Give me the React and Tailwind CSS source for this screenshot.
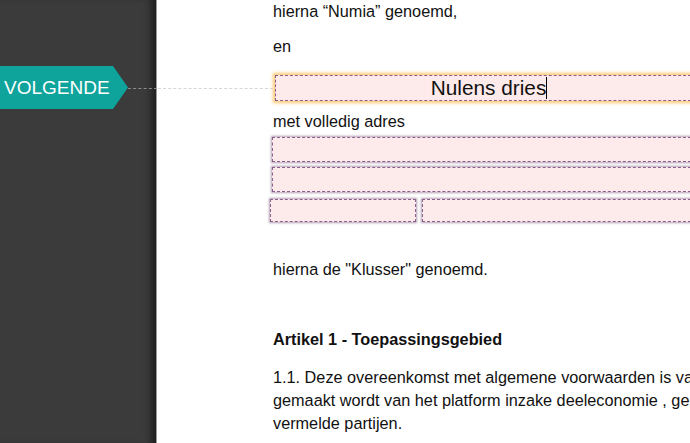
export default function App() {
    const field = 'bg-[#fdeaea] border border-dashed border-[#8b5f8b] shadow-[0_0_2px_1px_rgba(130,95,130,0.6)]';

    return (
        <div className="relative flex h-screen w-full overflow-hidden bg-white font-['Liberation_Sans',Arial,sans-serif] text-[#111]">
            {/* Left dark rail */}
            <div className="w-[157px] shrink-0 h-full bg-[#3b3b3b] border-r border-[#9a9a9a] shadow-[inset_-9px_0_8px_-5px_rgba(0,0,0,0.55)]"></div>

            {/* Document page */}
            <div className="flex-1 min-w-0">
                <div className="ml-[116px] w-[428px] text-[16.25px]">
                    <p className="leading-[22px] whitespace-nowrap">hierna “Numia” genoemd,</p>
                    <p className="mt-[13px] leading-[22px]">en</p>

                    {/* focused name field */}
                    <div className="mt-[18px] ml-[2px] h-[26px] flex items-center justify-center bg-[#fdeaea] border border-dashed border-[#8b5f8b] shadow-[0_0_3px_2px_rgba(251,190,90,0.85)]">
                        <span className="text-[20.8px] leading-[24px] pl-[2px]">Nulens dries</span>
                        <span className="w-px h-[22px] bg-black"></span>
                    </div>

                    <p className="mt-[9px] leading-[22px] whitespace-nowrap">met volledig adres</p>

                    <div className={`mt-[5px] -ml-[1px] h-[25px] ${field}`}></div>
                    <div className={`mt-[5px] -ml-[1px] h-[25px] ${field}`}></div>
                    <div className="mt-[7px] -ml-[3px] flex gap-[6px]">
                        <div className={`w-[146px] shrink-0 h-[23px] ${field}`}></div>
                        <div className={`flex-1 h-[23px] ${field}`}></div>
                    </div>

                    <p className="mt-[36px] leading-[22px] whitespace-nowrap">hierna de "Klusser" genoemd.</p>

                    <p className="mt-[48px] leading-[22px] font-bold whitespace-nowrap">Artikel 1 - Toepassingsgebied</p>

                    <div className="mt-[16px] leading-[23px] whitespace-nowrap">
                        <p>1.1. Deze overeenkomst met algemene voorwaarden is van toepassing op elk gebruik dat</p>
                        <p>gemaakt wordt van het platform inzake deeleconomie , georganiseerd door de hierboven</p>
                        <p>vermelde partijen.</p>
                    </div>
                </div>
            </div>

            {/* Next-field marker and connector */}
            <div className="absolute left-0 top-[66px] h-[43px] w-[128px] bg-[#0ea39b] [clip-path:polygon(0_0,113px_0,128px_50%,113px_100%,0_100%)] flex items-center pl-[4px]">
                <span className="text-white text-[19px] leading-none">VOLGENDE</span>
            </div>
            <div className="absolute left-[128px] top-[88px] w-[29px] border-t border-dashed border-[#8c8c8c]"></div>
            <div className="absolute left-[158px] top-[88px] w-[115px] border-t border-dashed border-[#d6d6d6]"></div>
        </div>
    );
}
